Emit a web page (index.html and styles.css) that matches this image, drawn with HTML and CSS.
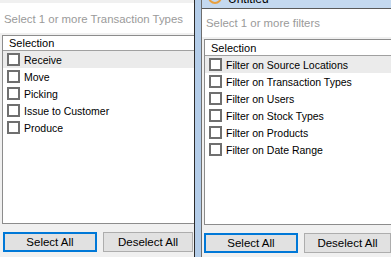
FILE: index.html
```html
<!DOCTYPE html>
<html lang="en">
<head>
    <meta charset="UTF-8">
    <title>Filters</title>
    <link rel="stylesheet" href="styles.css">
</head>
<body>
    <div class="pane pane-left">
        <div class="search">Select 1 or more Transaction Types</div>
        <div class="list">
            <div class="list-header">Selection</div>
            <div class="row hot"><span class="box"></span>Receive</div>
            <div class="row"><span class="box"></span>Move</div>
            <div class="row"><span class="box"></span>Picking</div>
            <div class="row"><span class="box"></span>Issue to Customer</div>
            <div class="row"><span class="box"></span>Produce</div>
        </div>
        <div class="buttons">
            <button class="btn focused">Select All</button>
            <button class="btn">Deselect All</button>
        </div>
    </div>

    <div class="gap"></div>

    <div class="pane pane-right">
        <div class="titlebar">
            <span class="app-icon"></span>
            <span class="title">Untitled</span>
        </div>
        <div class="search">Select 1 or more filters</div>
        <div class="list">
            <div class="list-header">Selection</div>
            <div class="row hot"><span class="box"></span>Filter on Source Locations</div>
            <div class="row"><span class="box"></span>Filter on Transaction Types</div>
            <div class="row"><span class="box"></span>Filter on Users</div>
            <div class="row"><span class="box"></span>Filter on Stock Types</div>
            <div class="row"><span class="box"></span>Filter on Products</div>
            <div class="row"><span class="box"></span>Filter on Date Range</div>
        </div>
        <div class="buttons">
            <button class="btn focused">Select All</button>
            <button class="btn">Deselect All</button>
        </div>
    </div>
</body>
</html>
```

FILE: styles.css
```css
/* Two docked filter panes, WinForms look */
body {
    margin: 0;
    width: 391px;
    height: 257px;
    overflow: hidden;
    display: flex;
    background-color: #f0f0f0;
    font-family: "Liberation Sans", Arial, sans-serif;
    font-size: 10.5px;
    color: #000000;
}

.pane {
    display: flex;
    flex-direction: column;
    background-color: #f0f0f0;
}

.pane-left {
    width: 194px;
    padding-top: 3px;
    border-right: 1px solid #2b2b2b;
}

.gap {
    width: 6px;
    background-color: #b4cde9; /* window frame */
}

.pane-right {
    flex: 1;
    border-left: 1px solid #6e6e6e;
    overflow: hidden;
}

.titlebar {
    height: 8px;
    background-color: #c4d9f0;
    display: flex;
    align-items: flex-end;
    gap: 6px;
    padding-left: 6px;
    overflow: hidden;
    border-bottom: 1px solid #5a5a5a;
}

.app-icon {
    width: 10px;
    height: 10px;
    margin-bottom: 4px;
    border: 2px solid #e8a040;
    border-radius: 50%;
    flex-shrink: 0;
}

.title {
    font-size: 12px;
    line-height: 12px;
    margin-bottom: 3px;
    color: #000000;
}

/* search box with placeholder */
.search {
    height: 30px;
    line-height: 33px;
    padding-left: 4px;
    background-color: #ffffff;
    color: #9a9a9a;
    font-size: 11.4px;
    white-space: nowrap;
}

.pane-right .search {
    height: 28px;
    line-height: 29px;
}

.list {
    flex: 1;
    margin: 2px 0 0 2px;
    background-color: #ffffff;
    border: 1px solid #8c8c8c;
    border-right: none;
    margin-bottom: 8px;
}

.list-header {
    height: 14px;
    line-height: 15px;
    padding-left: 6px;
    border-bottom: 1px solid #a0a0a0;
    background-color: #ffffff;
    font-size: 11px;
}

.pane-right .list-header {
    height: 15px;
    line-height: 17px;
}

.row {
    height: 17px;
    display: flex;
    align-items: center;
    gap: 4px;
    padding-left: 4px;
    white-space: nowrap;
}

.row.hot {
    background-color: #ebebeb;
}

.box {
    width: 9px;
    height: 9px;
    border: 2px solid #6f6f6f;
    background-color: #ffffff;
}

.buttons {
    display: flex;
    gap: 6px;
    padding: 0 0 5px 3px;
}

.pane-right .buttons {
    padding-left: 2px;
    padding-bottom: 4px;
}

.btn {
    height: 20px;
    width: 94px;
    padding: 0;
    font-family: "Liberation Sans", Arial, sans-serif;
    font-size: 11.5px;
    color: #000000;
    background-color: #e1e1e1;
    border: 1px solid #adadad;
}

.btn + .btn {
    width: 90px;
}

.pane-right .btn {
    width: 97px;
}

.pane-right .btn + .btn {
    width: 90px;
}

.btn.focused {
    border: 2px solid #0078d7;
}
```
